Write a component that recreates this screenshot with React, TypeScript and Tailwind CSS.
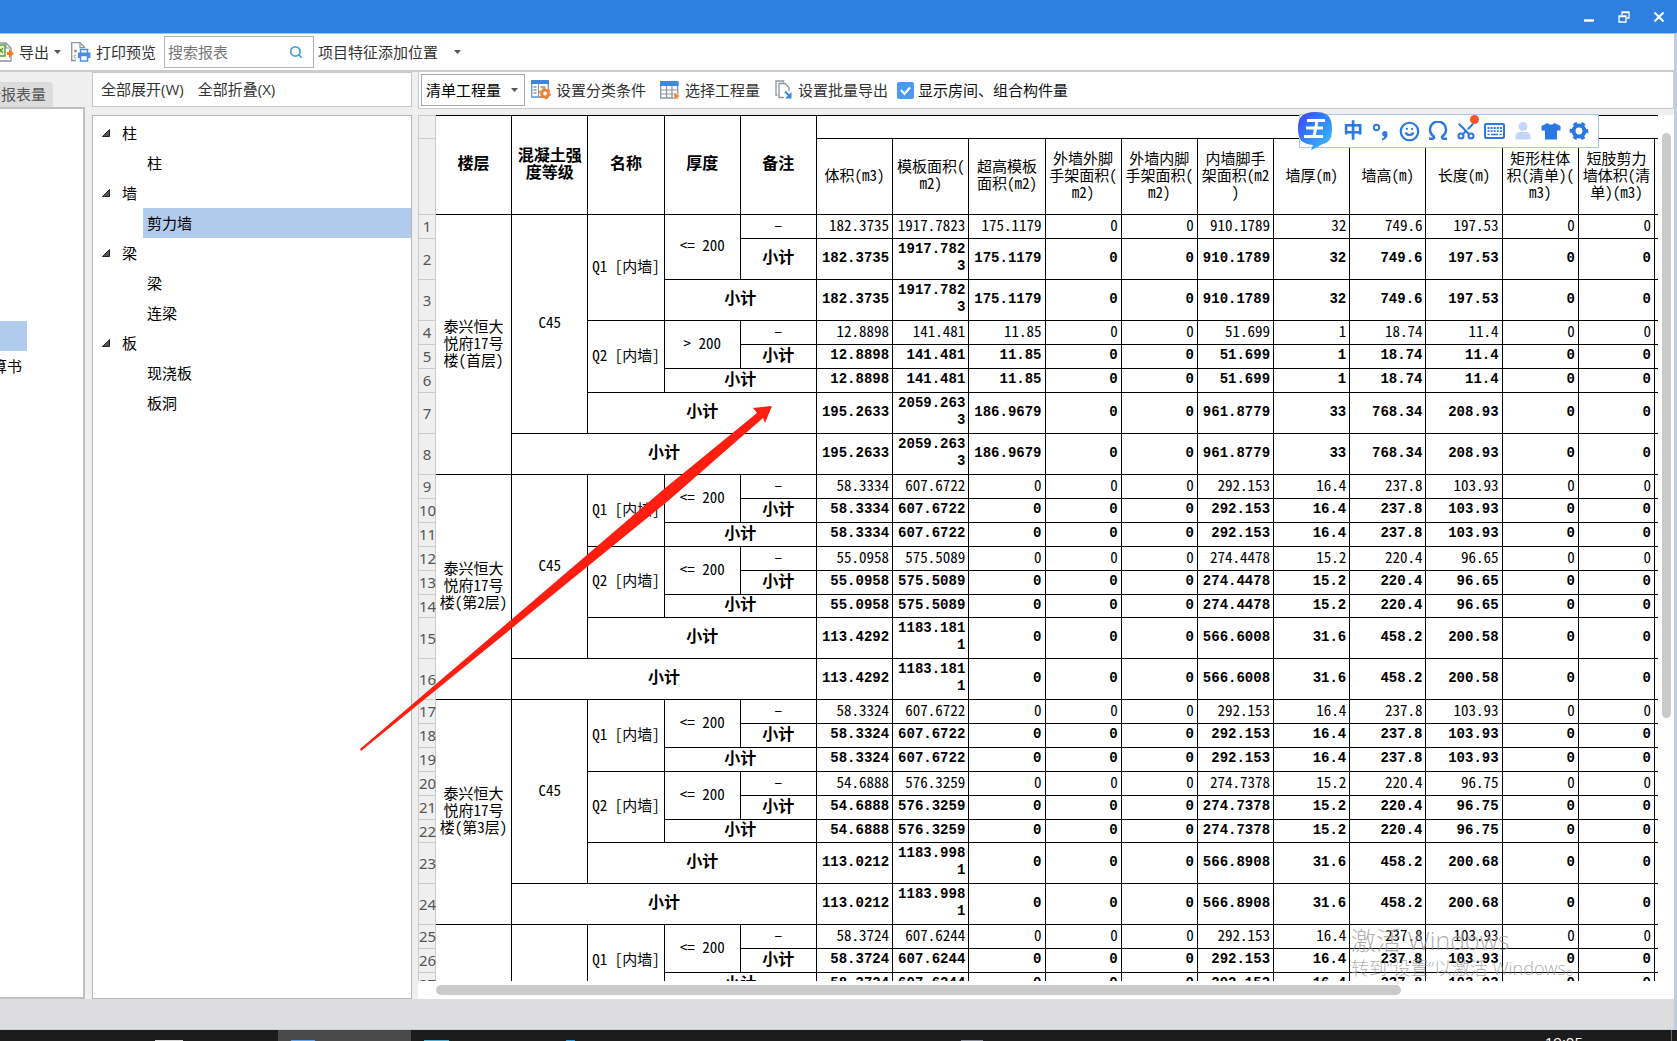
import React from 'react';
import { Scissors, Search, Smile } from 'lucide-react';

type TValues = string[];

interface IWall {
  name: string;
  thickness: string;
  values: TValues;
}

interface IFloorGroup {
  floor: string[];
  grade: string;
  walls: IWall[];
  total?: TValues;
}

interface ITreeGroup {
  label: string;
  children: string[];
}

const treeGroups: ITreeGroup[] = [
  { label: '柱', children: ['柱'] },
  { label: '墙', children: ['剪力墙'] },
  { label: '梁', children: ['梁', '连梁'] },
  { label: '板', children: ['现浇板', '板洞'] },
];

const groupHeaders: string[][] = [['楼层'], ['混凝土强', '度等级'], ['名称'], ['厚度'], ['备注']];

const valueHeaders: string[][] = [
  ['体积(m3)'],
  ['模板面积(', 'm2)'],
  ['超高模板', '面积(m2)'],
  ['外墙外脚', '手架面积(', 'm2)'],
  ['外墙内脚', '手架面积(', 'm2)'],
  ['内墙脚手', '架面积(m2', ')'],
  ['墙厚(m)'],
  ['墙高(m)'],
  ['长度(m)'],
  ['矩形柱体', '积(清单)(', 'm3)'],
  ['短肢剪力', '墙体积(清', '单)(m3)'],
];

const floorGroups: IFloorGroup[] = [
  {
    floor: ['泰兴恒大', '悦府17号', '楼(首层)'],
    grade: 'C45',
    walls: [
      {
        name: 'Q1 [内墙]',
        thickness: '<= 200',
        values: ['182.3735', '1917.7823', '175.1179', '0', '0', '910.1789', '32', '749.6', '197.53', '0', '0'],
      },
      {
        name: 'Q2 [内墙]',
        thickness: '> 200',
        values: ['12.8898', '141.481', '11.85', '0', '0', '51.699', '1', '18.74', '11.4', '0', '0'],
      },
    ],
    total: ['195.2633', '2059.2633', '186.9679', '0', '0', '961.8779', '33', '768.34', '208.93', '0', '0'],
  },
  {
    floor: ['泰兴恒大', '悦府17号', '楼(第2层)'],
    grade: 'C45',
    walls: [
      {
        name: 'Q1 [内墙]',
        thickness: '<= 200',
        values: ['58.3334', '607.6722', '0', '0', '0', '292.153', '16.4', '237.8', '103.93', '0', '0'],
      },
      {
        name: 'Q2 [内墙]',
        thickness: '<= 200',
        values: ['55.0958', '575.5089', '0', '0', '0', '274.4478', '15.2', '220.4', '96.65', '0', '0'],
      },
    ],
    total: ['113.4292', '1183.1811', '0', '0', '0', '566.6008', '31.6', '458.2', '200.58', '0', '0'],
  },
  {
    floor: ['泰兴恒大', '悦府17号', '楼(第3层)'],
    grade: 'C45',
    walls: [
      {
        name: 'Q1 [内墙]',
        thickness: '<= 200',
        values: ['58.3324', '607.6722', '0', '0', '0', '292.153', '16.4', '237.8', '103.93', '0', '0'],
      },
      {
        name: 'Q2 [内墙]',
        thickness: '<= 200',
        values: ['54.6888', '576.3259', '0', '0', '0', '274.7378', '15.2', '220.4', '96.75', '0', '0'],
      },
    ],
    total: ['113.0212', '1183.9981', '0', '0', '0', '566.8908', '31.6', '458.2', '200.68', '0', '0'],
  },
  {
    floor: [],
    grade: '',
    walls: [
      {
        name: 'Q1 [内墙]',
        thickness: '<= 200',
        values: ['58.3724', '607.6244', '0', '0', '0', '292.153', '16.4', '237.8', '103.93', '0', '0'],
      },
    ],
  },
];

const cell = 'border-r border-b border-black p-0 pb-[5px] text-center leading-[17px]';
const rowHead = 'border-x border-b border-[#cccccc] bg-[#efefef] p-0';
const toolButton = 'flex items-center gap-[5px] whitespace-nowrap text-[15px] text-[#333333]';

const Lines: React.FC<{ lines: string[] }> = ({ lines }) => (
  <>
    {lines.map((line) => (
      <span key={line} className="block whitespace-nowrap">
        {line}
      </span>
    ))}
  </>
);

const Caret: React.FC = () => (
  <svg width="7" height="4" viewBox="0 0 7 4" className="shrink-0" aria-hidden="true">
    <path d="M0 0h7L3.500 4z" fill="#555" />
  </svg>
);

const ExportIcon: React.FC = () => (
  <svg width="14" height="20" viewBox="0 0 14 20" className="shrink-0" aria-hidden="true">
    <path d="M0 1h6l5 5v13H0" fill="#fff" stroke="#8a969c" strokeWidth="1.300" />
    <path d="M6 1v5h5" fill="none" stroke="#8a969c" />
    <path d="M-3 3h8v11h-8z" fill="#e8f3e0" stroke="#5ea23a" strokeWidth="1.500" />
    <path d="M-1 6l4 5M3 6l-4 5" stroke="#5ea23a" strokeWidth="1.300" />
    <path d="M7 10h2V7l5 4.500-5 4.500v-3H7z" fill="#f47b20" />
  </svg>
);

const PrintIcon: React.FC = () => (
  <svg width="20" height="20" viewBox="0 0 20 20" className="shrink-0" aria-hidden="true">
    <path d="M5 18.500H.7V.7H9l5 5" fill="none" stroke="#8a969c" strokeWidth="1.300" />
    <path d="M9 .7v5h5" fill="none" stroke="#8a969c" strokeWidth="1.200" />
    <circle cx="4.500" cy="9" r="1.500" fill="#8a969c" />
    <path d="M5 13q-2 0-2 1.500T5 16" fill="none" stroke="#8a969c" />
    <path d="M9.500 11V7.500h7V11" fill="#fff" stroke="#4a90e2" strokeWidth="1.500" />
    <path d="M7 10.500h12.500V16H7z" fill="#4a90e2" />
    <path d="M9.500 13.500h7v5.500h-7z" fill="#fff" stroke="#4a90e2" strokeWidth="1.500" />
  </svg>
);

const ConditionIcon: React.FC = () => (
  <svg width="20" height="20" viewBox="0 0 20 20" className="shrink-0" aria-hidden="true">
    <path d="M.7 1h16.500v16H.7z" fill="#fff" stroke="#5b93d6" strokeWidth="1.300" />
    <path d="M0 0h18v4H0z" fill="#3f86dc" />
    <path d="M7.500 4v13" stroke="#8a969c" />
    <path d="M2.500 7h3M2.500 10h3M2.500 13h3M9.500 7h5" stroke="#8a969c" strokeWidth="1.300" />
    <circle cx="14" cy="13.500" r="3.400" fill="#fff" stroke="#f28132" strokeWidth="2.800" />
    <circle cx="14" cy="13.500" r="5.200" fill="none" stroke="#f28132" strokeWidth="1.600" strokeDasharray="2.700 2.700" />
  </svg>
);

const QuantityIcon: React.FC = () => (
  <svg width="20" height="19" viewBox="0 0 20 19" className="shrink-0" aria-hidden="true">
    <path d="M.7 1h17v16H.7z" fill="#fff" stroke="#8a969c" strokeWidth="1.300" />
    <path d="M0 0h18.500v5H0z" fill="#4189dd" />
    <path d="M1 9h16M1 13h16M6.500 5v12M12 5v12" stroke="#8a969c" strokeWidth="1.200" />
    <path d="M14 11l6 4-6 4z" fill="#f28132" stroke="#fff" strokeWidth=".6" />
  </svg>
);

const BatchIcon: React.FC = () => (
  <svg width="18" height="20" viewBox="0 0 18 20" className="shrink-0" aria-hidden="true">
    <path d="M2.500 15H1V1h7.500v1.500" fill="none" stroke="#8a969c" strokeWidth="1.300" />
    <path d="M9 17.500H4V3.500h6l4 4V11" fill="none" stroke="#8a969c" strokeWidth="1.300" />
    <path d="M10 11.500l5 5" stroke="#3f86dc" strokeWidth="2" />
    <path d="M16.500 12v6.500H10z" fill="#3f86dc" />
  </svg>
);

const TitleBar: React.FC = () => (
  <header className="flex h-[34px] shrink-0 items-center justify-end gap-[23px] border-b border-[#b9bdc4] bg-[#2d7fe0] pr-3">
    <button type="button" aria-label="最小化">
      <svg width="12" height="12" viewBox="0 0 12 12">
        <path d="M1 9.500h10" stroke="#fff" strokeWidth="2.500" />
      </svg>
    </button>
    <button type="button" aria-label="还原">
      <svg width="12" height="12" viewBox="0 0 12 12" fill="none" stroke="#fff" strokeWidth="1.300">
        <path d="M1 5h7v6H1zM1 5.500h7" />
        <path d="M4 4V1h7v6H8.500M4 1.500h7" />
      </svg>
    </button>
    <button type="button" aria-label="关闭">
      <svg width="12" height="12" viewBox="0 0 12 12">
        <path d="M1.500 1.500l9 9M10.500 1.500l-9 9" stroke="#fff" strokeWidth="2" />
      </svg>
    </button>
  </header>
);

const MainToolbar: React.FC = () => (
  <div className="flex h-[38px] shrink-0 items-center border-b-2 border-[#cbcccd] bg-white">
    <button type="button" className={toolButton}>
      <ExportIcon />
      导出
      <Caret />
    </button>
    <button type="button" className={`${toolButton} ml-[10px]`}>
      <PrintIcon />
      打印预览
    </button>
    <label className="ml-2 flex h-8 w-[150px] items-center border border-[#b4b4b4] pr-[10px] pl-[3px]">
      <input
        type="text"
        aria-label="搜索报表"
        placeholder="搜索报表"
        className="min-w-0 flex-1 bg-transparent text-[15px] outline-none placeholder:text-[#777777]"
      />
      <Search size={14} strokeWidth={3} className="text-[#4a9fd8]" />
    </label>
    <button type="button" className="ml-1 flex items-center gap-4 text-[15px] whitespace-nowrap text-[#333333]">
      项目特征添加位置
      <Caret />
    </button>
  </div>
);

const ReportPanel: React.FC = () => (
  <aside className="flex w-[85px] shrink-0 flex-col">
    <div className="flex h-[35px] items-end">
      <button
        type="button"
        className="flex h-[25px] w-[53px] items-center justify-end overflow-hidden rounded-tr bg-[#dcdcdc] pr-[7px] text-[15px] whitespace-nowrap text-[#555555]"
      >
        <span>计报表量</span>
      </button>
    </div>
    <div className="flex-1 border-t-2 border-r-2 border-b-2 border-[#bdbfc0] bg-white pt-[212px]">
      <div className="h-[30px] w-[27px] bg-[#b1cbec]" />
      <div className="flex h-[30px] w-[22px] items-center justify-end overflow-hidden text-[15px] whitespace-nowrap text-black">
        <span>算书</span>
      </div>
    </div>
  </aside>
);

const TreePanel: React.FC = () => (
  <section className="flex w-[320px] shrink-0 flex-col gap-2">
    <div className="flex h-[35px] items-center gap-[14px] border border-[#c3c7cb] bg-white px-2 text-[15px] text-[#333333]">
      <button type="button">全部展开(W)</button>
      <button type="button">全部折叠(X)</button>
    </div>
    <ul className="flex-1 border border-[#b4b6b8] bg-white pt-[2px] text-[15px] text-black">
      {treeGroups.map((group) => (
        <li key={group.label}>
          <div className="flex h-[30px] items-center gap-3 pl-[9px]">
            <svg width="8" height="8" viewBox="0 0 8 8" aria-hidden="true">
              <path d="M7.500 .5v7H.5z" fill="#555" stroke="#222" />
            </svg>
            {group.label}
          </div>
          <ul>
            {group.children.map((child) => (
              <li
                key={child}
                className={[
                  'ml-[50px] flex h-[30px] items-center pl-1',
                  child === '剪力墙' ? 'bg-[#b1cbec]' : '',
                ].join(' ')}
              >
                {child}
              </li>
            ))}
          </ul>
        </li>
      ))}
    </ul>
  </section>
);

const TableToolbar: React.FC = () => (
  <div className="flex h-[37px] shrink-0 items-center border border-t-0 border-[#c9cdd1] bg-white pl-[2px]">
    <div className="relative flex h-8 w-[104px] items-center">
      <select
        aria-label="工程量类型"
        className="h-full w-full appearance-none border border-[#a9a9a9] bg-white pl-1 text-[15px] text-black"
      >
        <option>清单工程量</option>
      </select>
      <span className="pointer-events-none absolute right-[7px]">
        <Caret />
      </span>
    </div>
    <button type="button" className={`${toolButton} ml-[6px]`}>
      <ConditionIcon />
      设置分类条件
    </button>
    <button type="button" className={`${toolButton} ml-[14px]`}>
      <QuantityIcon />
      选择工程量
    </button>
    <button type="button" className={`${toolButton} ml-[15px]`}>
      <BatchIcon />
      设置批量导出
    </button>
    <label className="relative ml-[9px] flex items-center gap-1 text-[15px] whitespace-nowrap text-[#111111]">
      <input
        type="checkbox"
        defaultChecked
        className="h-[17px] w-[17px] appearance-none rounded-xs bg-[#c8c8c8] checked:bg-[#4a9bf7]"
      />
      <svg width="17" height="17" viewBox="0 0 17 17" className="pointer-events-none absolute left-0" aria-hidden="true">
        <path d="M4 8l3.500 4L13 5.500" fill="none" stroke="#fff" strokeWidth="2" />
      </svg>
      显示房间、组合构件量
    </label>
  </div>
);

const ValueCells: React.FC<{ values: TValues; bold?: boolean }> = ({ values, bold }) => (
  <>
    {values.map((value, i) => (
      <td
        key={i}
        className={[
          'border-r border-b border-black p-0 pr-[3px] text-right leading-[17px] break-all',
          bold ? "pb-[2px] font-['Liberation_Mono',monospace] text-sm leading-[17px] font-bold" : 'pb-[5px] text-[15px]',
        ].join(' ')}
      >
        {value}
      </td>
    ))}
    <td className="border-b border-black p-0" />
  </>
);

const RowNumber: React.FC<{ n: number }> = ({ n }) => (
  <th
    scope="row"
    className={`${rowHead} font-['Noto_Sans',sans-serif] text-[15px] leading-[17px] font-normal text-[#555555]`}
  >
    {n}
  </th>
);

const isTall = (values: TValues) => values[1].length > 8;

const FloorRows: React.FC<{ group: IFloorGroup; start: number }> = ({ group, start }) => {
  const wallRows = group.walls.length * 3;
  const gradeSpan = wallRows + (group.total ? 1 : 0);
  const floorSpan = wallRows + (group.total ? 2 : 0);
  const subtotal = `${cell} text-base font-bold`;

  return (
    <tbody>
      {group.walls.map((wall, w) => {
        const n = start + w * 3;
        const height = isTall(wall.values) ? 'h-[41px]' : 'h-6';
        return (
          <React.Fragment key={wall.name}>
            <tr className="h-6">
              <RowNumber n={n} />
              {w === 0 && (
                <>
                  <td rowSpan={floorSpan} className={cell}>
                    <Lines lines={group.floor} />
                  </td>
                  <td rowSpan={gradeSpan} className={cell}>
                    {group.grade}
                  </td>
                </>
              )}
              <td rowSpan={3} className={`${cell} whitespace-nowrap`}>
                {wall.name}
              </td>
              <td rowSpan={2} className={cell}>
                {wall.thickness}
              </td>
              <td className={cell}>–</td>
              <ValueCells values={wall.values} />
            </tr>
            <tr className={height}>
              <RowNumber n={n + 1} />
              <td className={subtotal}>小计</td>
              <ValueCells values={wall.values} bold />
            </tr>
            <tr className={w === 1 && start > 1 ? 'h-[23px]' : height}>
              <RowNumber n={n + 2} />
              <td colSpan={2} className={subtotal}>
                小计
              </td>
              <ValueCells values={wall.values} bold />
            </tr>
          </React.Fragment>
        );
      })}
      {group.total && (
        <>
          <tr className="h-[41px]">
            <RowNumber n={start + wallRows} />
            <td colSpan={3} className={subtotal}>
              小计
            </td>
            <ValueCells values={group.total} bold />
          </tr>
          <tr className="h-[41px]">
            <RowNumber n={start + wallRows + 1} />
            <td colSpan={4} className={subtotal}>
              小计
            </td>
            <ValueCells values={group.total} bold />
          </tr>
        </>
      )}
    </tbody>
  );
};

const QuantityTable: React.FC = () => (
  <table className="w-full table-fixed border-separate border-spacing-0 font-['Noto_Sans_CJK_SC',sans-serif] text-[15px] text-black [font-feature-settings:'hwid']">
    <colgroup>
      <col className="w-[18px]" />
      {[...groupHeaders, ...valueHeaders].map((_, i) => (
        <col key={i} />
      ))}
      <col className="w-[3px]" />
    </colgroup>
    <thead>
      <tr className="h-6">
        <td className={`${rowHead} border-t`} />
        {groupHeaders.map((lines) => (
          <th key={lines[0]} rowSpan={2} scope="col" className={`${cell} border-t text-base font-bold`}>
            <Lines lines={lines} />
          </th>
        ))}
        <td colSpan={12} className="border-y border-black p-0" />
      </tr>
      <tr className="h-[76px]">
        <td className={rowHead} />
        {valueHeaders.map((lines) => (
          <th key={lines.join('')} scope="col" className={`${cell} font-normal`}>
            <Lines lines={lines} />
          </th>
        ))}
        <td className="border-b border-black p-0" />
      </tr>
    </thead>
    {floorGroups.map((group, i) => (
      <FloorRows key={i} group={group} start={1 + i * 8} />
    ))}
  </table>
);

const TablePanel: React.FC = () => (
  <section className="flex min-w-0 flex-1 flex-col">
    <TableToolbar />
    <div className="mt-[6px] flex min-h-0 flex-1 flex-col bg-white">
      <div className="flex min-h-0 flex-1">
        <div className="min-w-0 flex-1 overflow-hidden">
          <QuantityTable />
        </div>
        <div className="flex w-4 shrink-0 flex-col pt-[18px] pr-[3px] pl-1">
          <div className="h-[69%] rounded-full bg-[#cacaca]" />
        </div>
      </div>
      <div className="h-[18px] shrink-0 pt-1 pr-4 pl-[18px]">
        <div className="h-[10px] w-[79%] rounded-full bg-[#cacaca]" />
      </div>
    </div>
  </section>
);

const InputMethodBar: React.FC = () => (
  <div className="absolute top-[114px] right-[78px] flex h-[34px] items-center gap-2 border border-[#a9c6f3] bg-white pr-[9px] pl-[43px] text-[#2b78e4]">
    <svg width="34" height="38" viewBox="0 0 34 38" className="absolute -top-[3px] -left-[2px]" aria-hidden="true">
      <defs>
        <linearGradient id="ime" x1="0" y1="0" x2="1" y2="1">
          <stop offset="0" stopColor="#4a3cf5" />
          <stop offset=".4" stopColor="#2f7bff" />
          <stop offset="1" stopColor="#3fc4ff" />
        </linearGradient>
      </defs>
      <path
        d="M17 0C29 0 34 4 34 16c0 10-2 14-9 16-3 1-6 4-12 6l2-5C4 32 0 28 0 16 0 5 5 0 17 0z"
        fill="url(#ime)"
      />
      <path d="M9 8.500h18M8 16h17M6 24.500h19M19 9l-3 15.500" fill="none" stroke="#fff" strokeWidth="3" />
    </svg>
    <button type="button" className="w-5 text-[20px] leading-[20px] font-bold">
      中
    </button>
    <button type="button" aria-label="标点">
      <svg width="20" height="20" viewBox="0 0 20 20" className="block">
        <circle cx="5.500" cy="6.500" r="2.700" fill="none" stroke="currentColor" strokeWidth="1.900" />
        <path d="M13.500 10a3 3 0 0 1 3 3.200c0 3.300-2 5.600-5.500 6v-1.800c1.500-.4 2.200-1 2.300-1.900a2.800 2.800 0 0 1 .2-5.500z" fill="currentColor" />
      </svg>
    </button>
    <button type="button" aria-label="表情">
      <Smile size={21} strokeWidth={2.5} />
    </button>
    <button type="button" aria-label="符号">
      <svg width="20" height="20" viewBox="0 0 20 20" fill="none" stroke="currentColor" strokeWidth="2.500" className="block">
        <path d="M1 17.800h3.500c1.500 0 2-1.500 1-2.600A8 8 0 1 1 14.500 15.200c-1 1.100-.5 2.600 1 2.600H19" />
      </svg>
    </button>
    <button type="button" aria-label="截图" className="relative">
      <Scissors size={20} strokeWidth={2.5} className="-rotate-90" />
      <span className="absolute -top-[6px] -right-[3px] h-[9px] w-[9px] rounded-full bg-[#fb5530]" />
    </button>
    <button type="button" aria-label="键盘">
      <svg width="21" height="20" viewBox="0 0 21 20" fill="none" stroke="currentColor" className="block">
        <rect x="1" y="3" width="19" height="14" rx="1" strokeWidth="2" />
        <path d="M3.500 7h14.500M3.500 10.200h14.500" strokeWidth="1.800" strokeDasharray="2 1.100" />
        <path d="M3.500 13.500h2M7 13.500h7M15.500 13.500h2" strokeWidth="1.700" />
      </svg>
    </button>
    <button type="button" aria-label="账户" className="text-[#c2d7f7]">
      <svg width="20" height="20" viewBox="0 0 20 20" fill="currentColor" className="block">
        <circle cx="10" cy="5.500" r="4.500" />
        <path d="M2.500 18.500v-2.500q0-5 5-5h5q5 0 5 5v2.500z" />
      </svg>
    </button>
    <button type="button" aria-label="皮肤">
      <svg width="20" height="20" viewBox="0 0 20 20" fill="currentColor" className="block">
        <path d="M6.500 2q3.500 3.500 7 0L19.500 5v4.500H16V18.500H4V9.500H.5V5z" />
      </svg>
    </button>
    <button type="button" aria-label="设置">
      <svg width="20" height="20" viewBox="0 0 20 20" fill="none" stroke="currentColor" className="block">
        <circle cx="10" cy="10" r="5.400" strokeWidth="4" />
        <circle cx="10" cy="10" r="8" strokeWidth="2.600" strokeDasharray="4 4.370" strokeDashoffset="2" />
      </svg>
    </button>
  </div>
);

const PointerArrow: React.FC = () => (
  <svg
    width="412"
    height="345"
    viewBox="0 0 412 345"
    className="pointer-events-none absolute top-[406px] left-[360px]"
    aria-hidden="true"
  >
    <path d="M0 343L304 83 397 7 393 2 412 0 405 17 403 12 308 95 1 345z" fill="#ff1e10" />
  </svg>
);

const ActivationNotice: React.FC = () => (
  <div className="pointer-events-none absolute right-[78px] bottom-[60px] w-[248px] font-light whitespace-nowrap text-[#999999]/80">
    <p className="text-[25px] leading-[30px]">激活 Windows</p>
    <p className="text-[18px] leading-[26px]">转到“设置”以激活 Windows。</p>
  </div>
);

const Taskbar: React.FC = () => (
  <footer className="flex h-[11px] shrink-0 items-start overflow-hidden bg-[#1c1c1c]">
    <div className="flex w-[278px] items-end justify-end self-stretch pr-[95px]">
      <span className="h-px w-7 bg-[#d8d8d8]" />
    </div>
    <div className="flex w-[133px] items-end self-stretch bg-[#4a4a4a] pl-[13px]">
      <span className="h-px w-6 bg-[#5fa5f5]" />
    </div>
    <div className="flex flex-1 items-end self-stretch pl-[13px]">
      <span className="h-px w-[25px] bg-[#4bb0d8]" />
      <span className="ml-[117px] h-px w-[9px] bg-[#2b9be0]" />
      <span className="ml-[386px] h-px w-[22px] bg-[#8b8f9b]" />
    </div>
    <time className="mr-[88px] pt-[5px] text-[15px] leading-[15px] text-white">19:05</time>
    <span className="w-[6px] self-stretch border-l border-[#6a6a6a]" />
  </footer>
);

const App: React.FC = () => (
  <div
    lang="zh-CN"
    className="relative flex h-screen flex-col overflow-hidden bg-[#efefef] font-['Open_Sans','Noto_Sans_CJK_SC',sans-serif]"
  >
    <TitleBar />
    <div className="flex min-h-0 flex-1 flex-col border-r-3 border-[#c3cde0]">
      <MainToolbar />
      <main className="flex min-h-0 flex-1">
        <ReportPanel />
        <div className="w-[7px] shrink-0" />
        <TreePanel />
        <div className="w-[6px] shrink-0" />
        <TablePanel />
      </main>
      <div className="h-[31px] shrink-0 border-b border-[#c3cde0] bg-[#dddde0]" />
    </div>
    <Taskbar />
    <InputMethodBar />
    <PointerArrow />
    <ActivationNotice />
  </div>
);

export default App;
